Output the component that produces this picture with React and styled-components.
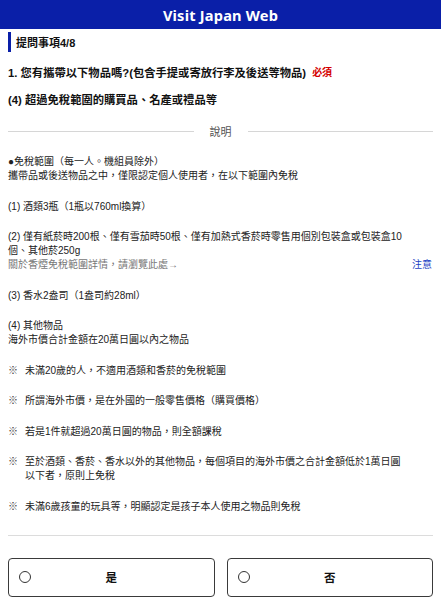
import React from "react";
import styled, { createGlobalStyle } from "styled-components";

const GlobalStyle = createGlobalStyle`
  html, body {
    margin: 0;
    padding: 0;
    background: #fff;
  }
  body {
    font-family: "Liberation Sans", "Noto Sans CJK TC", sans-serif;
    color: #222;
  }
`;

const Page = styled.div`
  width: 441px;
  min-height: 599px;
  background: #fff;
`;

const Header = styled.header`
  height: 29px;
  background: #0a1fa8;
  color: #fff;
  display: flex;
  align-items: center;
  justify-content: center;
  font-family: "Noto Sans", "Open Sans", sans-serif;
  font-weight: 700;
  font-size: 14.6px;
  letter-spacing: 0.2px;
`;

const Content = styled.main`
  padding: 3px 8px 0;
`;

const SectionTitle = styled.h2`
  margin: 0;
  height: 20px;
  display: flex;
  align-items: center;
  padding-left: 5px;
  border-left: 3px solid #0a1fa8;
  font-size: 11px;
  font-weight: 700;
  color: #111;
`;

const Question = styled.p`
  margin: ${(p) => p.$top}px 0 0;
  line-height: 16px;
  font-size: 11.3px;
  font-weight: 700;
  color: #111;
  display: flex;
  align-items: center;
`;

const Required = styled.span`
  margin-left: 6px;
  color: #d40000;
  font-size: 10px;
  font-weight: 700;
`;

const Divider = styled.div`
  margin-top: 15px;
  display: flex;
  align-items: center;
  gap: 16px;
  font-size: 11px;
  color: #555;

  &::before,
  &::after {
    content: "";
    flex: 1;
    height: 1px;
    background: #d6d6d6;
  }
`;

const Notes = styled.div`
  margin-top: 16px;
  font-size: 10px;
  line-height: 14px;
  color: #222;
`;

const Para = styled.p`
  margin: 0;
  & + & {
    margin-top: 16.5px;
  }
`;

const LinkRow = styled.div`
  display: flex;
  justify-content: space-between;
  color: #777;
`;

const NoteLink = styled.a`
  color: #1d3fc4;
  text-decoration: none;
  padding-right: 1px;
`;

const Remark = styled.p`
  margin: 16.5px 0 0;
  display: flex;
`;

const Mark = styled.span`
  flex: 0 0 17px;
  color: #444;
`;

const Rule = styled.hr`
  margin: 21px 0 0;
  border: 0;
  height: 1px;
  background: #dcdcdc;
`;

const Choices = styled.div`
  margin-top: 22px;
  display: grid;
  grid-template-columns: 1fr 1fr;
  gap: 12px;
`;

const Choice = styled.label`
  position: relative;
  height: 39px;
  box-sizing: border-box;
  border: 1.5px solid #3a3a3a;
  border-radius: 4px;
  display: flex;
  align-items: center;
  justify-content: center;
  font-size: 11.5px;
  font-weight: 700;
  color: #111;
`;

const Radio = styled.span`
  position: absolute;
  left: 10px;
  top: 50%;
  width: 10px;
  height: 10px;
  margin-top: -6px;
  border: 1px solid #333;
  border-radius: 50%;
  background: #fff;
`;

const remarks = [
  ["未滿20歲的人，不適用酒類和香菸的免稅範圍"],
  ["所謂海外市價，是在外國的一般零售價格（購買價格）"],
  ["若是1件就超過20萬日圓的物品，則全額課稅"],
  ["至於酒類、香菸、香水以外的其他物品，每個項目的海外市價之合計金額低於1萬日圓", "以下者，原則上免稅"],
  ["未滿6歲孩童的玩具等，明顯認定是孩子本人使用之物品則免稅"],
];

const App = () => (
  <Page>
    <GlobalStyle />
    <Header>Visit Japan Web</Header>
    <Content>
      <SectionTitle>提問事項4/8</SectionTitle>
      <Question $top={13}>
        1. 您有攜帶以下物品嗎?(包含手提或寄放行李及後送等物品)
        <Required>必須</Required>
      </Question>
      <Question $top={11}>(4) 超過免稅範圍的購買品、名產或禮品等</Question>
      <Divider>說明</Divider>
      <Notes>
        <Para>
          ●免稅範圍（每一人。機組員除外）
          <br />
          攜帶品或後送物品之中，僅限認定個人使用者，在以下範圍內免稅
        </Para>
        <Para>(1) 酒類3瓶（1瓶以760ml換算）</Para>
        <Para>
          (2) 僅有紙菸時200根、僅有雪茄時50根、僅有加熱式香菸時零售用個別包裝盒或包裝盒10
          <br />
          個、其他菸250g
          <LinkRow>
            <span>關於香煙免稅範圍詳情，請瀏覽此處→</span>
            <NoteLink href="#">注意</NoteLink>
          </LinkRow>
        </Para>
        <Para>(3) 香水2盎司（1盎司約28ml）</Para>
        <Para>
          (4) 其他物品
          <br />
          海外市價合計金額在20萬日圓以內之物品
        </Para>
        {remarks.map((lines) => (
          <Remark key={lines[0]}>
            <Mark>※</Mark>
            <span>
              {lines.map((line, i) => (
                <React.Fragment key={line}>
                  {i > 0 && <br />}
                  {line}
                </React.Fragment>
              ))}
            </span>
          </Remark>
        ))}
      </Notes>
      <Rule />
      <Choices>
        <Choice>
          <Radio />是
        </Choice>
        <Choice>
          <Radio />否
        </Choice>
      </Choices>
    </Content>
  </Page>
);

export default App;
